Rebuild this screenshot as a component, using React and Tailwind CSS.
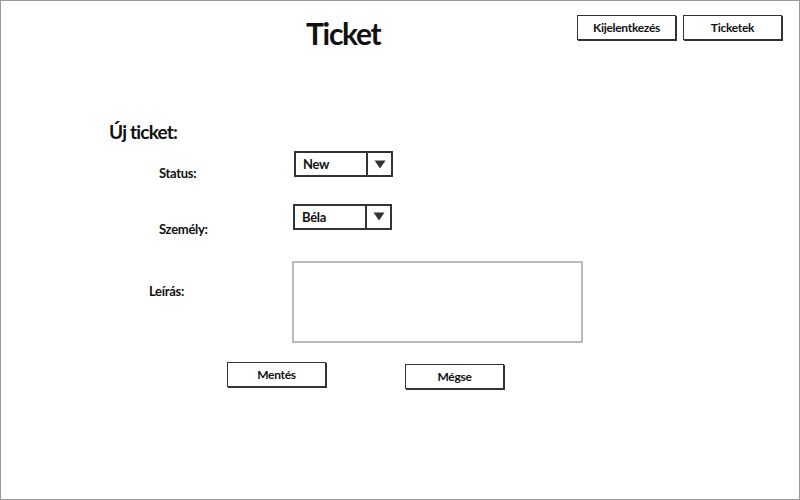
import React from 'react';

const font = { fontFamily: 'Lato, "Open Sans", sans-serif' };

function SketchButton({ children, className = '' }) {
  return (
    <div
      className={
        'flex items-center justify-center h-[25px] w-[99px] bg-white border border-[#333] shadow-[1px_1px_0_#333] text-[12px] font-bold text-[#111] tracking-[-0.3px] ' +
        className
      }
    >
      {children}
    </div>
  );
}

function Select({ value }) {
  return (
    <div className="flex h-[26px] w-[99px] border-2 border-[#333] bg-white">
      <div className="flex-1 pl-[7px] pt-[2px] text-[13px] font-bold text-[#111] tracking-[-0.3px]">{value}</div>
      <div className="w-[25px] border-l-2 border-[#333] flex items-center justify-center">
        <svg width="12" height="9" viewBox="0 0 12 9">
          <path d="M0.5 0.5 L11.5 0.5 L6 8.5 Z" fill="#333" />
        </svg>
      </div>
    </div>
  );
}

function App() {
  return (
    <div className="w-[800px] h-[500px] bg-white border border-[#999] flex flex-col" style={font}>
      <div className="flex items-start">
        <h1 className="ml-[305px] mt-[12px] text-[30px] font-bold text-[#111] tracking-[-1.3px] leading-[40px]">
          Ticket
        </h1>
        <div className="ml-auto mr-[17px] mt-[14px] flex gap-[7px]">
          <SketchButton>Kijelentkezés</SketchButton>
          <SketchButton>Ticketek</SketchButton>
        </div>
      </div>

      <h2 className="ml-[108px] mt-[66px] text-[19px] font-bold text-[#111] tracking-[-0.8px] leading-[26px]">
        Új ticket:
      </h2>

      <div className="flex mt-[6px]">
        <div className="w-[293px] pl-[158px] pt-[13px] text-[13px] font-bold text-[#111] tracking-[-0.3px]">Status:</div>
        <Select value="New" />
      </div>

      <div className="flex mt-[20px]">
        <div className="w-[292px] pl-[158px] pt-[16px] text-[13px] font-bold text-[#111] tracking-[-0.3px]">Személy:</div>
        <Select value="Béla" />
      </div>

      <div className="flex mt-[22px]">
        <div className="w-[291px] pl-[148px] pt-[21px] text-[13px] font-bold text-[#111] tracking-[-0.3px]">Leírás:</div>
        <div className="w-[291px] h-[82px] border-2 border-[#bbb] bg-white" />
      </div>

      <div className="flex mt-[19px] items-start">
        <SketchButton className="ml-[226px]">Mentés</SketchButton>
        <SketchButton className="ml-[79px] mt-[2px]">Mégse</SketchButton>
      </div>
    </div>
  );
}

export default App;
